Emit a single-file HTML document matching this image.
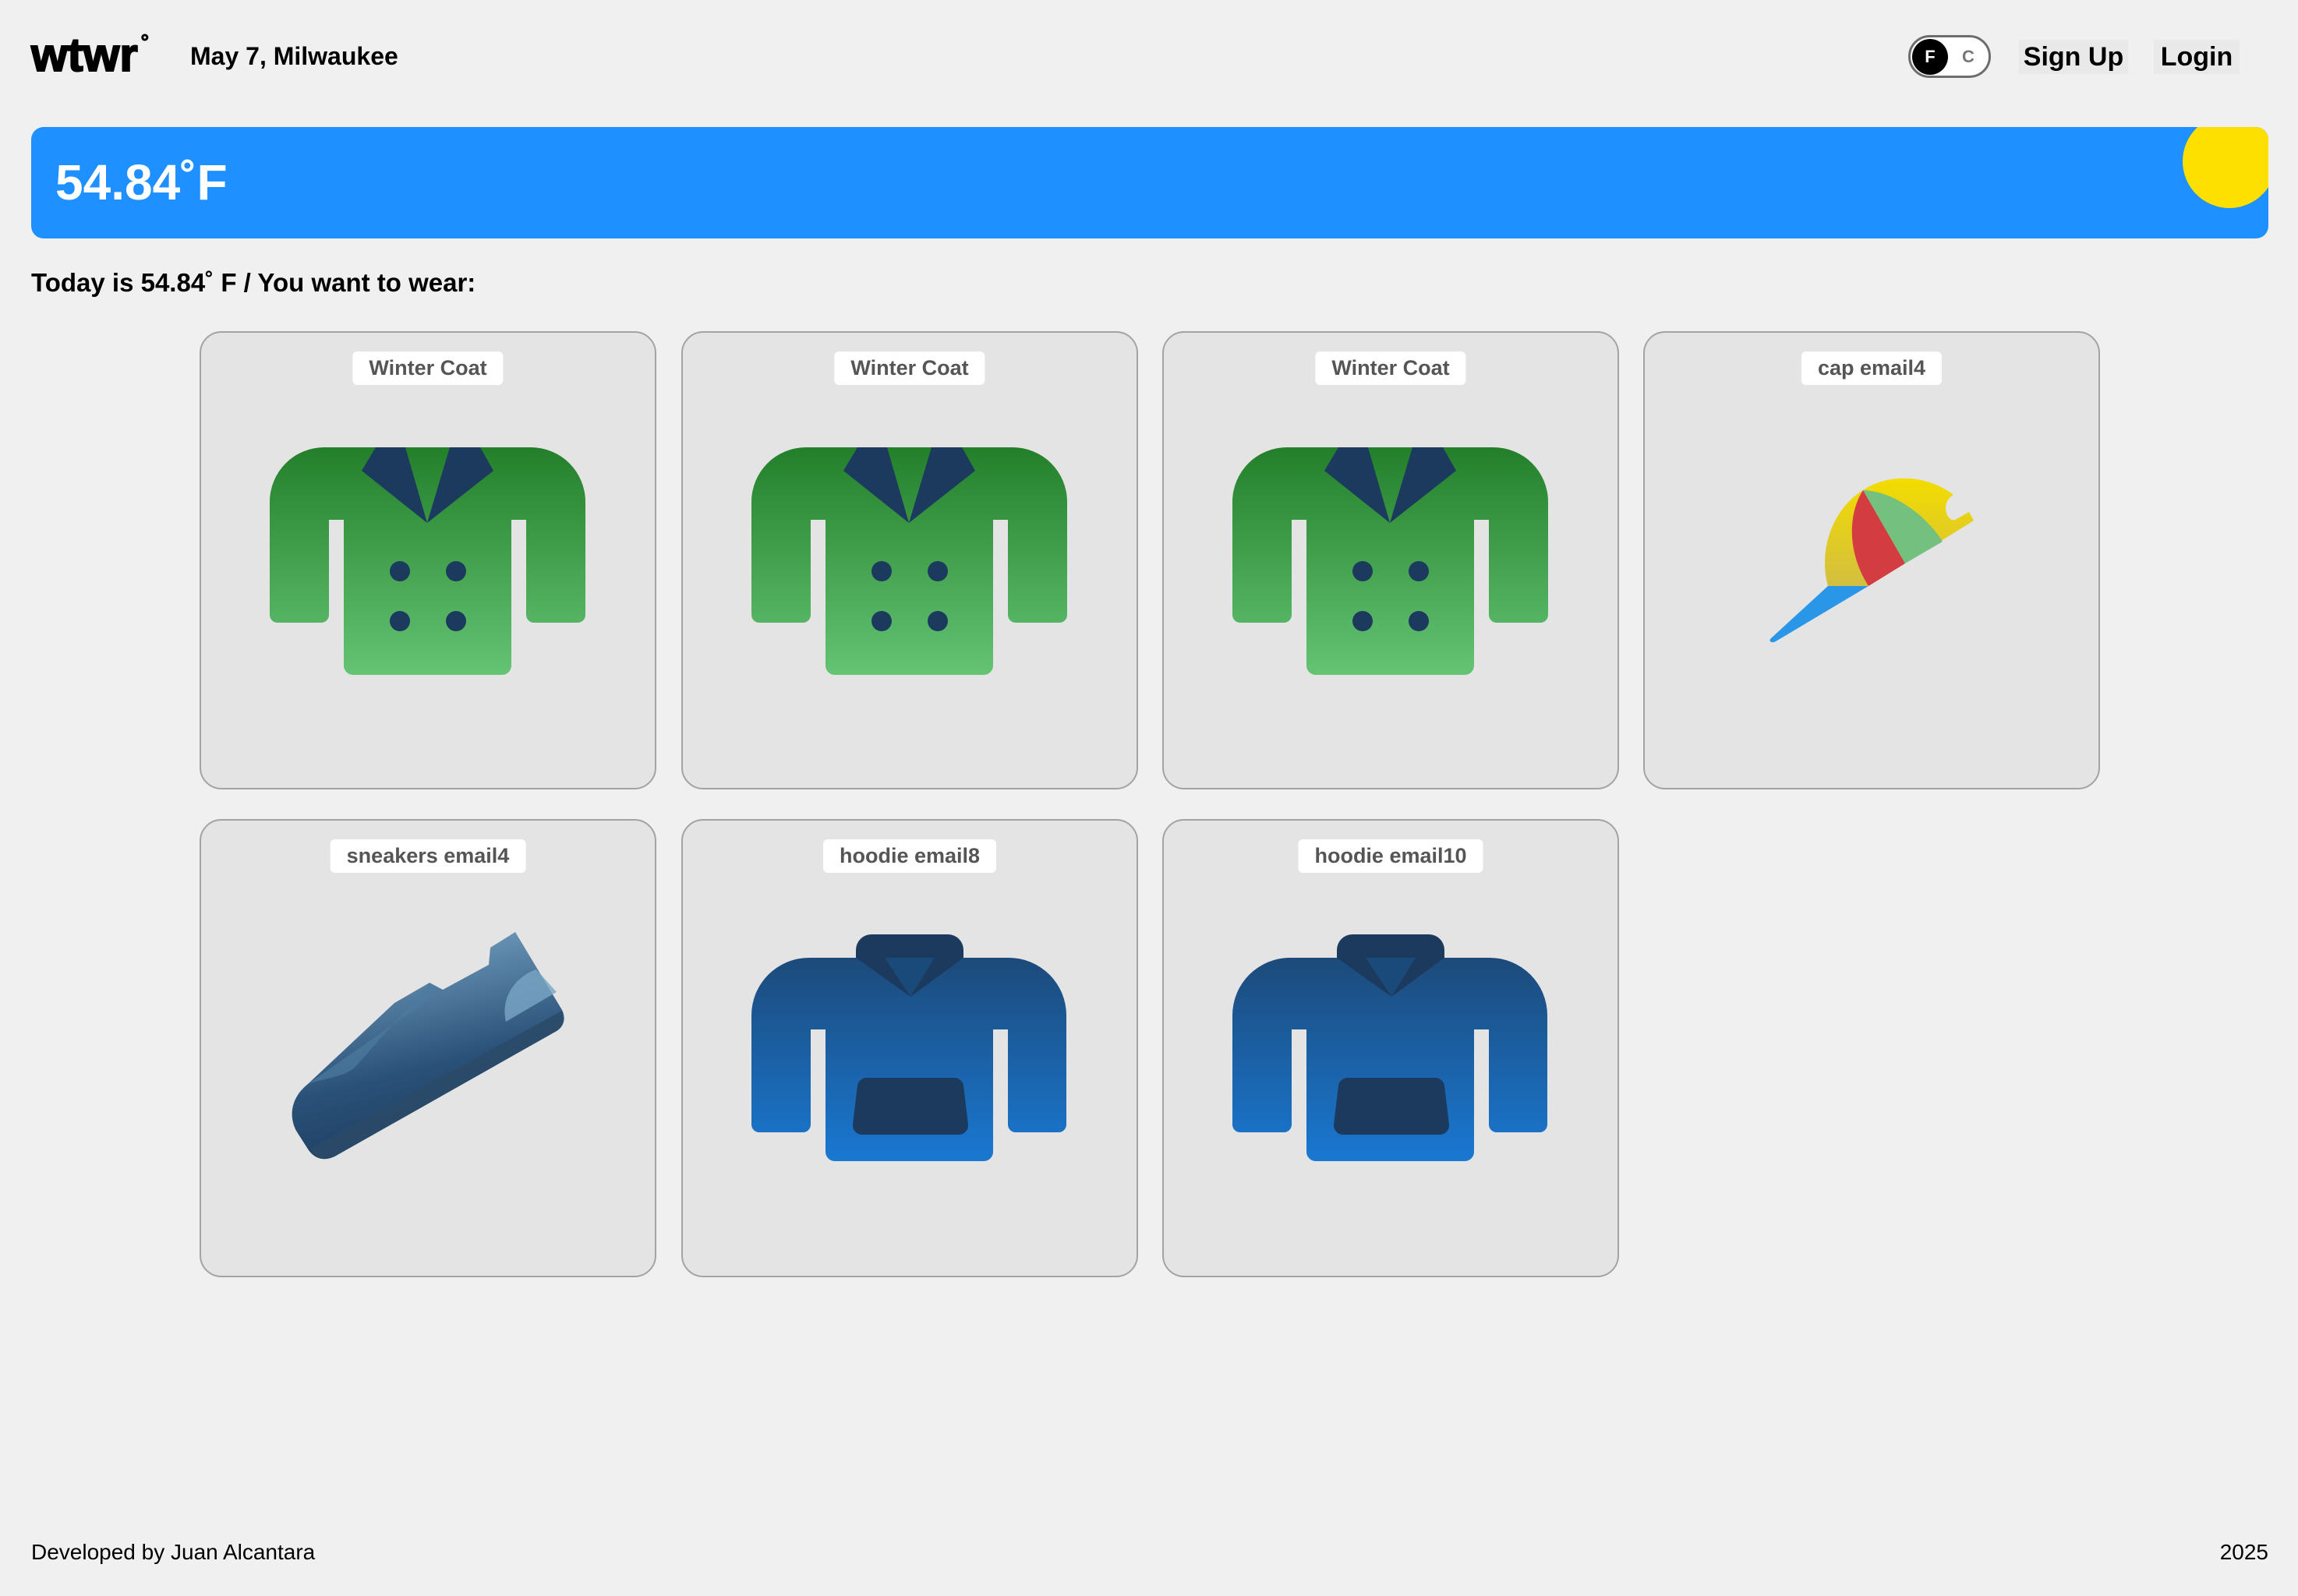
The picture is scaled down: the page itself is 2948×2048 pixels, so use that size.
<!DOCTYPE html>
<html><head><meta charset="utf-8"><style>
*{margin:0;padding:0;box-sizing:border-box}
html,body{width:2948px;height:2048px;background:#f0f0f0;font-family:"Liberation Sans",sans-serif;color:#000;overflow:hidden;position:relative}
.logo{position:absolute;left:40px;top:36px;font-size:60px;font-weight:900;letter-spacing:0px;-webkit-text-stroke:2px #000}
.logo sup{font-size:26px;position:relative;top:-8px;margin-left:4px;-webkit-text-stroke:1px #000}
.date{position:absolute;left:244px;top:54px;font-size:32px;font-weight:bold}
.toggle{position:absolute;left:2448px;top:45px;width:106px;height:55px;border:3px solid #6d6d6d;border-radius:28px;background:#fff}
.toggle .k{position:absolute;left:2px;top:2px;width:46px;height:46px;border-radius:50%;background:#000;color:#fff;font-weight:bold;font-size:22px;text-align:center;line-height:46px}
.toggle .c{position:absolute;left:66px;top:2px;line-height:46px;font-size:22px;font-weight:bold;color:#777}
.btn{position:absolute;top:51px;height:44px;background:#e9e9e9;font-size:34px;font-weight:bold;line-height:44px;text-align:center}
.bar{position:absolute;left:40px;top:163px;width:2870px;height:143px;background:#1e90ff;border-radius:16px;overflow:hidden}
.bar .t{position:absolute;left:31px;top:34px;font-size:64px;font-weight:bold;color:#fff}
.bar .sun{position:absolute;left:2760px;top:-16px;width:120px;height:120px;border-radius:50%;background:#fde000}
.today{position:absolute;left:40px;top:344px;font-size:33px;font-weight:bold}
.card{position:absolute;width:586px;height:588px;background:#e4e4e4;border:2px solid #a3a3a3;border-radius:28px}
.card .lb{position:absolute;top:24px;left:50%;transform:translateX(-50%);height:43px;padding:0 21px;background:#fff;border-radius:6px;font-size:27px;color:#555;line-height:43px;white-space:nowrap;font-weight:bold}
.card svg{position:absolute;left:-2px;top:-2px}
.foot{position:absolute;top:1976px;font-size:28px}
</style></head><body>
<div class="logo">wtwr<sup>°</sup></div>
<div class="date">May 7, Milwaukee</div>
<div class="toggle"><div class="k">F</div><div class="c">C</div></div>
<div class="btn" style="left:2590px;width:140px">Sign Up</div>
<div class="btn" style="left:2763px;width:110px">Login</div>
<div class="bar"><div class="t">54.84˚F</div><div class="sun"></div></div>
<div class="today">Today is 54.84˚ F / You want to wear:</div>

<svg width="0" height="0" style="position:absolute"><defs>
<linearGradient id="gg" x1="0" y1="0" x2="0" y2="1"><stop offset="0" stop-color="#237f2a"/><stop offset="1" stop-color="#64c474"/></linearGradient>
<linearGradient id="bg" x1="0" y1="0" x2="0" y2="1"><stop offset="0" stop-color="#1c4a7a"/><stop offset="1" stop-color="#1a78d2"/></linearGradient>
<linearGradient id="yg" x1="0" y1="0" x2="0" y2="1"><stop offset="0" stop-color="#f3dc00"/><stop offset="1" stop-color="#d3bf40"/></linearGradient>
<linearGradient id="sg" x1="0.3" y1="0" x2="0.6" y2="1"><stop offset="0" stop-color="#7aa6c6"/><stop offset="0.6" stop-color="#2a5178"/><stop offset="1" stop-color="#1c3a5e"/></linearGradient>
<symbol id="coat" viewBox="0 0 586 588">
<path d="M160 149H425A70 70 0 0 1 495 219V364A10 10 0 0 1 485 374H429A10 10 0 0 1 419 364V242H400V429A12 12 0 0 1 388 441H197A12 12 0 0 1 185 429V242H166V364A10 10 0 0 1 156 374H100A10 10 0 0 1 90 364V219A70 70 0 0 1 160 149Z" fill="url(#gg)"/>
<polygon points="226,149 208,179 292,246 264,149" fill="#1c3a5e"/>
<polygon points="321,149 292,246 377,179 360,149" fill="#1c3a5e"/>
<circle cx="257" cy="308" r="13" fill="#1c3a5e"/><circle cx="329" cy="308" r="13" fill="#1c3a5e"/>
<circle cx="257" cy="372" r="13" fill="#1c3a5e"/><circle cx="329" cy="372" r="13" fill="#1c3a5e"/>
</symbol>
<symbol id="hood" viewBox="0 0 586 588">
<path d="M164 178H420A74 74 0 0 1 494 252V392A10 10 0 0 1 484 402H429A10 10 0 0 1 419 392V270H400V427A12 12 0 0 1 388 439H197A12 12 0 0 1 185 427V270H166V392A10 10 0 0 1 156 402H100A10 10 0 0 1 90 392V252A74 74 0 0 1 164 178Z" fill="url(#bg)"/>
<path d="M244 148H342A20 20 0 0 1 362 168V178L294 228L224 178V168A20 20 0 0 1 244 148Z" fill="#1c3a5e"/>
<polygon points="261,178 294,228 325,178" fill="#1a4a7a"/>
<path d="M238 332H350A12 12 0 0 1 362 342L368 392A12 12 0 0 1 356 405H232A12 12 0 0 1 220 392L226 342A12 12 0 0 1 238 332Z" fill="#1c3a5e"/>
</symbol>
</defs></svg>

<div class="card" style="left:256px;top:425px"><svg width="586" height="588"><use href="#coat"/></svg><div class="lb">Winter Coat</div></div>
<div class="card" style="left:874px;top:425px"><svg width="586" height="588"><use href="#coat"/></svg><div class="lb">Winter Coat</div></div>
<div class="card" style="left:1491px;top:425px"><svg width="586" height="588"><use href="#coat"/></svg><div class="lb">Winter Coat</div></div>
<div class="card" style="left:2108px;top:425px"><svg width="586" height="588">
<path d="M237 327C225 285 240 230 282 204C300 192 320 188 340 189C365 190 385 200 398 210C390 214 385 225 390 236C392 240 395 243 400 242L418 232L424 243L289 327Z" fill="url(#yg)"/>
<path d="M282 204C262 235 262 285 289 327L336 298Z" fill="#d33c40"/>
<path d="M282 204C320 205 362 235 384 270L336 298Z" fill="#74c07e"/>
<path d="M237 327H289L170 398C165 401 160 398 164 394Z" fill="#2a96e8"/>
</svg><div class="lb">cap email4</div></div>
<div class="card" style="left:256px;top:1051px"><svg width="586" height="588">
<path d="M139 340L250 236L295 210L312 219L371 187L373 165L405 145L465 245C470 255 468 266 458 272L175 432C160 440 148 436 140 425L124 400C116 385 114 360 139 340Z" fill="url(#sg)"/>
<path d="M139 340C160 332 185 332 200 318L295 210L312 219Z" fill="#4d7aa0" opacity="0.7"/>
<path d="M432 193C410 200 385 225 393 260L458 222Z" fill="#7aa6c6" opacity="0.8"/>
<path d="M142 423L465 246C468 258 466 266 458 272L175 432C160 440 150 436 142 423Z" fill="#2b4a68" opacity="0.85"/>
</svg><div class="lb">sneakers email4</div></div>
<div class="card" style="left:874px;top:1051px"><svg width="586" height="588"><use href="#hood"/></svg><div class="lb">hoodie email8</div></div>
<div class="card" style="left:1491px;top:1051px"><svg width="586" height="588"><use href="#hood"/></svg><div class="lb">hoodie email10</div></div>

<div class="foot" style="left:40px">Developed by Juan Alcantara</div>
<div class="foot" style="right:38px">2025</div>
</body></html>
